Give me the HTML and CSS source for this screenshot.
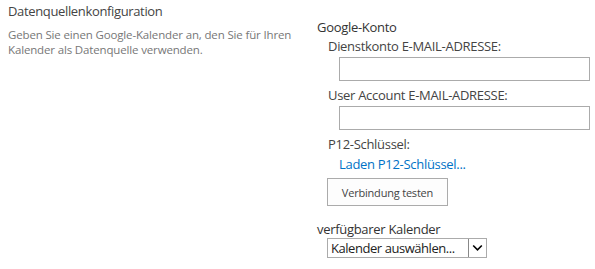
FILE: index.html
```html
<!DOCTYPE html>
<html>
<head>
<meta charset="utf-8">
<link rel="stylesheet" href="styles.css">
</head>
<body>
<div class="page">
  <div class="left">
    <div class="title">Datenquellenkonfiguration</div>
    <div class="desc">Geben Sie einen Google-Kalender an, den Sie für Ihren Kalender als Datenquelle verwenden.</div>
  </div>
  <div class="right">
    <div class="group-title">Google-Konto</div>
    <div class="field">
      <div class="label">Dienstkonto E-MAIL-ADRESSE:</div>
      <input class="text" type="text">
    </div>
    <div class="field">
      <div class="label">User Account E-MAIL-ADRESSE:</div>
      <input class="text" type="text">
    </div>
    <div class="field">
      <div class="label">P12-Schlüssel:</div>
      <a class="link" href="#">Laden P12-Schlüssel...</a>
    </div>
    <button class="btn" type="button">Verbindung testen</button>
    <div class="group-title cal">verfügbarer Kalender</div>
    <div class="select">
      <span class="sel-text">Kalender auswählen...</span>
      <span class="sel-arrow"><svg width="11" height="8" viewBox="0 0 11 8"><path d="M1.2 1.5 L5.5 5.8 L9.8 1.5" fill="none" stroke="#000" stroke-width="1.6"/></svg></span>
    </div>
  </div>
</div>
</body>
</html>
```
FILE: styles.css
```css
html, body {
  margin: 0;
  padding: 0;
  background: #fff;
}
body {
  font-family: "Open Sans", "Noto Sans", sans-serif;
  color: #444;
}
.page {
  display: flex;
}
.left {
  width: 317px;
  flex: none;
  padding-left: 8px;
  box-sizing: border-box;
  padding-top: 3px;
}
.title {
  font-size: 13px;
  line-height: 17px;
  color: #444;
  letter-spacing: -0.35px;
}
.desc {
  margin-top: 7px;
  font-size: 11.5px;
  line-height: 15px;
  color: #777;
  letter-spacing: -0.15px;
}
.right {
  display: flex;
  flex-direction: column;
  align-items: flex-start;
  padding-top: 18px;
}
.group-title {
  font-size: 13px;
  line-height: 18px;
  color: #333;
  letter-spacing: -0.3px;
}
.field {
  margin-left: 11px;
  margin-top: 1px;
}
.field + .field {
  margin-top: 5px;
}
.label {
  font-size: 13px;
  line-height: 18px;
  color: #444;
  letter-spacing: -0.3px;
}
.text {
  display: block;
  margin: 2px 0 0 11px;
  width: 251px;
  height: 24px;
  box-sizing: border-box;
  border: 1px solid #ababab;
  padding: 0;
  background: #fff;
}
.link {
  display: block;
  margin: 2px 0 0 11px;
  font-size: 13px;
  line-height: 18px;
  color: #0072c6;
  text-decoration: none;
  letter-spacing: -0.3px;
}
.btn {
  margin: 5px 0 0 10px;
  width: 121px;
  height: 28px;
  box-sizing: border-box;
  border: 1px solid #ababab;
  background: #fdfdfd;
  font-family: "Open Sans", "Noto Sans", sans-serif;
  font-size: 11px;
  color: #444;
  padding: 0;
  letter-spacing: -0.2px;
}
.cal {
  margin-top: 14px;
}
.select {
  display: flex;
  margin: 0 0 0 10px;
  width: 160px;
  height: 20px;
  box-sizing: border-box;
  border: 1px solid #ababab;
  background: #fff;
}
.sel-text {
  flex: 1;
  min-width: 0;
  font-size: 13px;
  line-height: 18px;
  color: #222;
  padding-left: 3px;
  letter-spacing: -0.45px;
  white-space: nowrap;
  overflow: hidden;
}
.sel-arrow {
  flex: none;
  width: 17px;
  border-left: 1px solid #888;
  display: flex;
  align-items: center;
  justify-content: center;
  background: #fff;
}
```
